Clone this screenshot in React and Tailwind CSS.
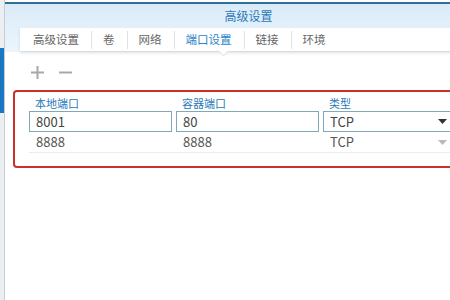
const font = { fontFamily: '"Noto Sans CJK SC", "Open Sans", sans-serif' }

const tabs = ['高级设置', '卷', '网络', '端口设置', '链接', '环境']

function Caret({ light }) {
  return (
    <svg width="9" height="5" viewBox="0 0 9 5" className="shrink-0">
      <path d="M0 0 L9 0 L4.5 5 Z" fill={light ? '#b8b8b8' : '#333'} />
    </svg>
  )
}

export default function App() {
  return (
    <div className="w-[450px] h-[300px] flex overflow-hidden bg-white" style={font}>
      {/* background window peeking at the left */}
      <div className="w-[5px] shrink-0 flex flex-col bg-[#eceff1] border-r border-[#c9cdd1]">
        <div className="h-[48px]" />
        <div className="h-[65px] bg-[#1a78c2]" />
      </div>

      <div className="flex-1 flex flex-col">
        <div className="h-[2px] bg-white" />
        <div className="h-[2px] bg-[#2f6f96]" />
        <div className="h-[48px] bg-gradient-to-b from-[#d9ebf8] to-[#edf5fc] flex flex-col">
          <div className="h-[24px] flex items-center justify-center text-[12px] text-[#2a7ab8] pl-[42px]">
            高级设置
          </div>
          <div className="ml-[15px] -mr-[10px] h-[23px] pl-[2px] bg-white flex items-center shadow-[0_2px_3px_rgba(0,0,0,0.12)] relative">
            {tabs.map((t, i) => (
              <div key={t} className="flex items-center">
                <div
                  className={`pl-[11px] pr-[12px] text-[11.5px] leading-[23px] ${
                    t === '端口设置' ? 'text-[#2a86c8]' : 'text-[#666]'
                  }`}
                >
                  {t}
                </div>
                {i < tabs.length - 1 && <div className="w-px h-[18px] bg-[#e2e2e2]" />}
              </div>
            ))}
            <div className="absolute left-[200px] -bottom-[4px] w-[7px] h-[7px] bg-white rotate-45 border-r border-b border-[#e4e4e4]" />
          </div>
        </div>

        <div className="flex-1 flex flex-col">
          <div className="h-[38px] flex items-center gap-[13px] pl-[25px] pt-[2px]">
            <svg width="15" height="15" viewBox="0 0 15 15">
              <path d="M7.5 1 V14 M1 7.5 H14" stroke="#a8a8a8" strokeWidth="2" />
            </svg>
            <svg width="15" height="15" viewBox="0 0 15 15">
              <path d="M1 7.5 H14" stroke="#a8a8a8" strokeWidth="2" />
            </svg>
          </div>

          <div className="ml-[8px] -mr-[8px] h-[78px] border-2 border-[#c7302b] rounded-[4px] pl-[14px] flex flex-col">
            <div className="h-[19px] flex items-end text-[11px] text-[#2a7ab8] leading-none pb-[2px]">
              <div className="w-[147px] pl-[6px]">本地端口</div>
              <div className="w-[147px] pl-[6px]">容器端口</div>
              <div className="pl-[6px]">类型</div>
            </div>
            <div className="h-[21px] flex gap-[4px] text-[13px] text-[#444]">
              <div className="w-[143px] border border-[#7fa9ba] pl-[6px] leading-[19px]">8001</div>
              <div className="w-[143px] border border-[#7fa9ba] pl-[6px] leading-[19px]">80</div>
              <div className="flex-1 border border-[#7fa9ba] pl-[6px] pr-[8px] flex items-center justify-between leading-[19px]">
                <span>TCP</span>
                <Caret />
              </div>
            </div>
            <div className="h-[21px] flex gap-[4px] text-[13px] text-[#555] border-b border-[#ececec] items-center">
              <div className="w-[143px] pl-[7px]">8888</div>
              <div className="w-[143px] pl-[7px]">8888</div>
              <div className="flex-1 pl-[7px] pr-[9px] flex items-center justify-between">
                <span>TCP</span>
                <Caret light />
              </div>
            </div>
          </div>
        </div>
      </div>
    </div>
  )
}
